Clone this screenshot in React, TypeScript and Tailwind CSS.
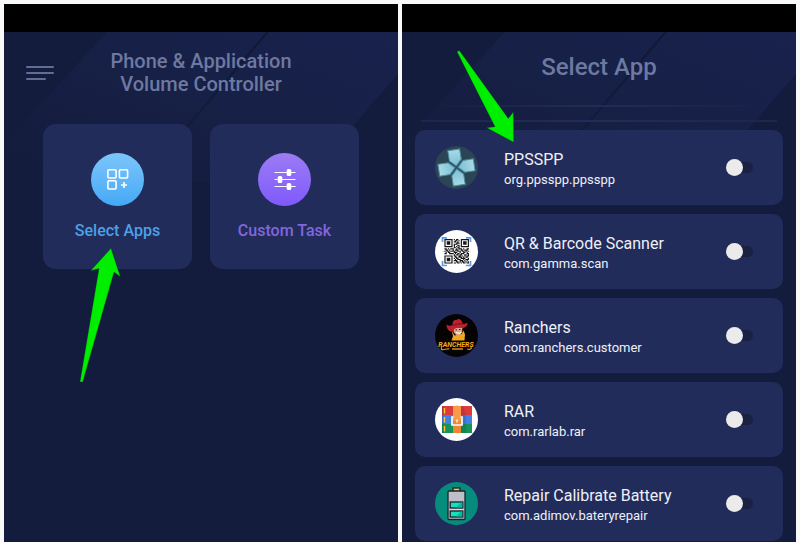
import React from "react";

function Backdrop() {
  return (
    <svg
      aria-hidden="true"
      className="absolute inset-x-0 top-0 w-full"
      viewBox="0 0 394 150"
    >
      <defs>
        <linearGradient id="band" x1="0" y1="0.9" x2="1" y2="0">
          <stop offset="0.05" stopColor="#131c3c" />
          <stop offset="0.4" stopColor="#161f43" />
          <stop offset="1" stopColor="#19224d" />
        </linearGradient>
        <linearGradient id="seam" x1="0" y1="1" x2="0" y2="0">
          <stop offset="0" stopColor="#131b3b" stopOpacity="0" />
          <stop offset="0.4" stopColor="#131b3b" />
          <stop offset="1" stopColor="#111936" />
        </linearGradient>
      </defs>
      <path d="M103 0H394V42L300 150H-35Z" fill="url(#band)" />
      <path d="M262 0H265L138 150H135Z" fill="url(#seam)" />
    </svg>
  );
}

function Panel({ children }: { children: React.ReactNode }) {
  return (
    <div className="flex flex-col bg-[#131c3c]">
      <div className="h-7 bg-black" />
      <div className="relative flex-1">
        <Backdrop />
        <div className="relative">{children}</div>
      </div>
    </div>
  );
}

function Arrow({ points, className }: { points: string; className: string }) {
  return (
    <svg aria-hidden="true" className={className}>
      <polygon points={points} fill="#00ee00" stroke="#0b3a1c" strokeOpacity="0.5" strokeWidth="0.6" />
    </svg>
  );
}

function AppsIcon() {
  return (
    <svg width="22" height="22" viewBox="0 0 22 22" fill="none" stroke="white" strokeWidth="1.6" aria-hidden="true">
      <rect x="0.9" y="0.8" width="8.2" height="8.2" rx="1" />
      <rect x="12.4" y="0.8" width="8.2" height="8.2" rx="1" />
      <rect x="0.9" y="11.8" width="8.2" height="8.2" rx="1" />
      <path d="M17 13v6M14 16h6" />
    </svg>
  );
}

function SlidersIcon() {
  return (
    <svg width="22" height="22" viewBox="0 0 22 22" aria-hidden="true">
      <path d="M0.5 3.5h21M0.5 10.5h21M0.5 17.5h21" stroke="white" strokeWidth="1.2" />
      <g fill="white">
        <rect x="12.7" y="0" width="4.6" height="7" rx="1.6" />
        <rect x="3.7" y="7" width="4.6" height="7" rx="1.6" />
        <rect x="12.7" y="14" width="4.6" height="7" rx="1.6" />
      </g>
    </svg>
  );
}

function PpssppIcon() {
  return (
    <svg className="size-[43px]" viewBox="0 0 43 43" aria-hidden="true">
      <defs>
        <linearGradient id="pad" x1="0" y1="0" x2="0" y2="1">
          <stop offset="0" stopColor="#a9d9e6" />
          <stop offset="1" stopColor="#7bbfd2" />
        </linearGradient>
      </defs>
      <circle cx="21.5" cy="21.5" r="21.5" fill="#2c4554" />
      <g transform="rotate(-9 21.5 21.5)" stroke="#4b8ba3" strokeWidth="1">
        {[0, 90, 180, 270].map((angle) => (
          <path
            key={angle}
            transform={`rotate(${angle} 21.5 21.5)`}
            d="M15.5 3.6h12v10.4L21.5 20l-6-6Z"
            fill="url(#pad)"
          />
        ))}
      </g>
    </svg>
  );
}

const qrRows = [
  "111111101011001111111",
  "100000100110101000001",
  "101110101101001011101",
  "101110100011101011101",
  "101110101110001011101",
  "100000101001101000001",
  "111111101010101111111",
  "000000001101100000000",
  "110101110010111010011",
  "011010010111001101110",
  "101101111001110110101",
  "010110001110010011010",
  "110011110101101110011",
  "000000001011011001101",
  "111111101100110101011",
  "100000100110111010110",
  "101110101011001111001",
  "101110100101110010111",
  "101110101110011101010",
  "100000100011010110101",
  "111111101101101011011",
];

function QrIcon() {
  const modules = qrRows
    .flatMap((row, y) => [...row].map((c, x) => (c === "1" ? `M${x} ${y}h1v1h-1z` : "")))
    .join("");
  return (
    <svg className="size-[43px]" viewBox="0 0 43 43" aria-hidden="true">
      <circle cx="21.5" cy="21.5" r="21.5" fill="white" />
      <path d={modules} fill="#151515" transform="translate(9.4 9) scale(1.17)" />
      <path
        d="M7.5 12V7.8H12M31 7.8h4.5V12M7.5 31v4.5H12M31 35.5h4.5V31"
        fill="none"
        stroke="#5b9bf0"
        strokeWidth="1.7"
      />
      <path d="M7.5 21.5h28" stroke="#e04848" strokeOpacity="0.4" strokeWidth="0.7" />
    </svg>
  );
}

function RanchersIcon() {
  return (
    <svg className="size-[43px]" viewBox="0 0 43 43" aria-hidden="true">
      <circle cx="21.5" cy="21.5" r="21.5" fill="#050304" />
      <path d="M16.5 16.5l3 5 7-1.5 2-3.5 1.5 4-.5 6H16.500l1.500-4.500Z" fill="#f0a81c" />
      <path d="M18.5 13.5h9l-.5 5-2.5 3-3.5-.5-2.5-3Z" fill="#e2a384" />
      <path d="M21 18.5l3.5.8 1.5-1.5" stroke="white" strokeWidth="1.1" fill="none" />
      <path d="M20.5 15.8h1.5M24 15.5h1.5" stroke="#2b1210" strokeWidth="0.9" />
      <path
        d="M11.5 10.5c2 1.500 4.500 1.500 6 .5 0-3 1-5.500 3-5 1.200.3 2-1.400 3.500-1 2.500.5 3.500 3 3.700 5 2 .2 3.600-.5 4.600-1.500.6 3-2 5.500-5 5.500-3-.8-6-.6-8.300 1.500l-1.500 2c-3.500.5-6-2.500-6-7Z"
        fill="#bb2030"
      />
      <path d="M17.7 11.5c3-1.500 6.500-2 9.800-1.300" stroke="#711019" fill="none" />
      <text
        x="21"
        y="33"
        textAnchor="middle"
        fill="#f5ae1b"
        className="font-[Roboto,sans-serif] text-[7px] font-bold italic"
      >
        RANCHERS
      </text>
      <path d="M6.5 32.500v3c3 1 5-1.500 8-.5M36 33c1 2-1.500 3-4 2M17 35h11" fill="none" stroke="#d58f17" strokeWidth="1.3" />
    </svg>
  );
}

function RarIcon() {
  return (
    <svg className="size-[43px]" viewBox="0 0 43 43" aria-hidden="true">
      <circle cx="21.5" cy="21.5" r="21.5" fill="white" />
      <path d="M7 8h30v9H7Z" fill="#dc3b3d" />
      <path d="M7 17h30v9H7Z" fill="#4480e4" />
      <path d="M7 26h30v9H7Z" fill="#15935a" />
      <path d="M7 8h1.5v27H7Z" fill="#1c2a3c" fillOpacity="0.25" />
      <path d="M26 8h2l3 9v18h-5Z" fill="#122040" fillOpacity="0.15" />
      <path d="M9.5 10v5.5M9.5 19v5.5M9.5 28v5.5" stroke="#fac83c" strokeWidth="1.4" />
      <path d="M18 8h8v27h-8Z" fill="#ed8734" />
      <path d="M18 9q4-3 8 0v14h-8Z" fill="#f89a48" />
      <path d="M18.5 19H17v8h10v-8h-1.5" fill="none" stroke="white" strokeWidth="1.7" />
      <path d="M22 21.5v3" stroke="#fff0dc" strokeWidth="1.5" />
    </svg>
  );
}

function BatteryIcon() {
  return (
    <svg className="size-[43px]" viewBox="0 0 43 43" aria-hidden="true">
      <circle cx="21.5" cy="21.5" r="21.5" fill="#068c7d" />
      <g stroke="#18242b" strokeWidth="1.3">
        <rect x="18" y="6" width="7" height="3.5" fill="#f6c54c" />
        <rect x="13" y="9" width="17" height="28.5" rx="1" fill="#bdbfc9" />
        <rect x="15.2" y="20" width="12.6" height="6" fill="#13e2bd" />
        <rect x="15.2" y="29" width="12.6" height="6" fill="#13e2bd" />
      </g>
      <path d="M21 25.4l5-4.8h1.3v4.8ZM21 34.4l5-4.8h1.3v4.8Z" fill="#06b9a2" />
      <path d="M14.5 27.5h14" stroke="#dcdde3" />
    </svg>
  );
}

const apps = [
  { name: "PPSSPP", id: "org.ppsspp.ppsspp", icon: <PpssppIcon /> },
  { name: "QR & Barcode Scanner", id: "com.gamma.scan", icon: <QrIcon /> },
  { name: "Ranchers", id: "com.ranchers.customer", icon: <RanchersIcon /> },
  { name: "RAR", id: "com.rarlab.rar", icon: <RarIcon /> },
  { name: "Repair Calibrate Battery", id: "com.adimov.bateryrepair", icon: <BatteryIcon /> },
];

export default function App() {
  return (
    <main className="grid min-h-screen grid-cols-2 gap-1 bg-[#f8fafa] px-1 pt-1 font-[Roboto,sans-serif]">
      <Panel>
        <header className="grid grid-cols-[28px_1fr_28px] items-center px-[22px] pt-[18px]">
          <button type="button" aria-label="Menu" className="flex flex-col gap-1">
            <span className="h-0.5 w-7 rounded-full bg-[#626d95]" />
            <span className="h-0.5 w-7 rounded-full bg-[#626d95]" />
            <span className="h-0.5 w-5 rounded-full bg-[#626d95]" />
          </button>
          <h1 className="text-center text-xl leading-[23px] font-medium text-[#6d79a1]">
            Phone &amp; Application
            <br />
            Volume Controller
          </h1>
        </header>
        <div className="grid grid-cols-2 gap-[18px] px-[39px] pt-7">
          <button type="button" className="flex h-[145px] flex-col items-center gap-[13px] rounded-[13px] bg-[#222c5a] pt-[29px]">
            <span className="flex size-[53px] items-center justify-center rounded-full bg-linear-to-b from-[#7cc5fb] to-[#43a9f5]">
              <AppsIcon />
            </span>
            <span className="text-base font-medium text-[#4ba1e6]">Select Apps</span>
          </button>
          <button type="button" className="flex h-[145px] flex-col items-center gap-[13px] rounded-[13px] bg-[#222c5a] pt-[29px]">
            <span className="flex size-[53px] items-center justify-center rounded-full bg-linear-to-b from-[#9c7bf4] to-[#8059fb]">
              <SlidersIcon />
            </span>
            <span className="text-base font-medium text-[#8066df]">Custom Task</span>
          </button>
        </div>
        <Arrow
          className="absolute top-[215px] left-[75px] h-[137px] w-[44px]"
          points="32,1.3 41.3,29.7 35,25 3.7,135 1,135 20,21.5 11.7,23.7"
        />
      </Panel>
      <Panel>
        <h2 className="pt-[21px] text-center text-2xl leading-7 font-medium text-[#6d79a1]">Select App</h2>
        <div className="flex flex-col gap-[13px] px-[19px] pt-6">
          <div className="mx-2 h-0.5 bg-linear-to-r from-transparent via-[#222c58] to-transparent" />
          <div className="h-0.5 bg-linear-to-r from-[#1c2650] via-[#222c58] to-[#1c2650]" />
        </div>
        <ul className="flex flex-col gap-[9px] px-[13px] pt-2 pb-px">
          {apps.map((app) => (
            <li key={app.id}>
              <label className="flex h-[75px] items-center rounded-[10px] bg-[#222c5a] pr-[30px] pl-5">
                {app.icon}
                <span className="ml-[26px] flex flex-1 flex-col pt-1 text-[#eef0f8]">
                  <span className="text-base leading-5">{app.name}</span>
                  <span className="text-[13px] leading-5">{app.id}</span>
                </span>
                <input
                  type="checkbox"
                  className="flex h-[11px] w-[27px] appearance-none items-center rounded-full bg-[#1a2142] before:size-[17px] before:shrink-0 before:rounded-full before:bg-[#ebebeb] checked:justify-end"
                />
              </label>
            </li>
          ))}
        </ul>
        <Arrow
          className="absolute top-[17px] left-[54px] h-[95px] w-[60px]"
          points="57.7,93.3 57.3,63 52.3,69.5 3.3,1.6 1,2.7 39,77.7 30.7,78.7"
        />
      </Panel>
    </main>
  );
}
